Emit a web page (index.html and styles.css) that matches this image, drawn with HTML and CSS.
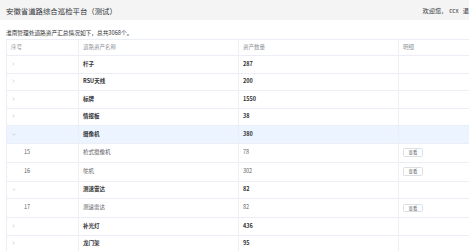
FILE: index.html
```html
<!DOCTYPE html>
<html lang="zh-CN">
<head>
    <meta charset="UTF-8">
    <meta name="viewport" content="width=device-width, initial-scale=1.0">
    <title>安徽省道路综合巡检平台（测试）</title>
    <link rel="stylesheet" href="styles.css">
</head>
<body>
    <div class="page">
        <div class="header">
            <div class="title">安徽省道路综合巡检平台（测试）</div>
            <div class="user">
                <span>欢迎您，</span>
                <span class="name">ccx</span>
                <a href="#" class="logout">退出</a>
            </div>
        </div>
        <div class="summary">淮南管理处道路资产汇总情况如下，总共3068个。</div>
        <table class="asset-table">
            <colgroup>
                <col class="c1">
                <col class="c2">
                <col class="c3">
                <col class="c4">
            </colgroup>
            <thead>
                <tr>
                    <th>序号</th>
                    <th>道路资产名称</th>
                    <th>资产数量</th>
                    <th>明细</th>
                </tr>
            </thead>
            <tbody id="asset-list"></tbody>
        </table>
    </div>
    <script>
        const assets = [
            { name: '杆子', count: 287 },
            { name: 'RSU天线', count: 200 },
            { name: '标牌', count: 1550 },
            { name: '情报板', count: 38 },
            { name: '摄像机', count: 380, open: true, current: true, children: [
                { no: 15, name: '枪式摄像机', count: 78 },
                { no: 16, name: '鸵机', count: 302 }
            ] },
            { name: '测速雷达', count: 82, open: true, children: [
                { no: 17, name: '测速雷达', count: 82 }
            ] },
            { name: '补光灯', count: 436 },
            { name: '龙门架', count: 95 }
        ];

        const arrowRight = '<svg viewBox="0 0 4 6" width="3" height="4"><path d="M1 0.8 L3 3 L1 5.2" fill="none" stroke="#a8abb2" stroke-width="0.7"/></svg>';
        const arrowDown = '<svg viewBox="0 0 6 4" width="4" height="3"><path d="M0.8 1 L3 3 L5.2 1" fill="none" stroke="#a8abb2" stroke-width="0.7"/></svg>';

        const list = document.getElementById('asset-list');
        assets.forEach(item => {
            const row = document.createElement('tr');
            row.className = 'parent-row' + (item.current ? ' current' : '');
            row.innerHTML = `
                <td><span class="arrow">${item.open ? arrowDown : arrowRight}</span></td>
                <td>${item.name}</td>
                <td>${item.count}</td>
                <td></td>
            `;
            list.appendChild(row);
            if (item.open) {
                item.children.forEach(child => {
                    const childRow = document.createElement('tr');
                    childRow.className = 'child-row';
                    childRow.innerHTML = `
                        <td class="child-no">${child.no}</td>
                        <td>${child.name}</td>
                        <td>${child.count}</td>
                        <td><button class="view-button">查看</button></td>
                    `;
                    list.appendChild(childRow);
                });
            }
        });
    </script>
</body>
</html>
```

FILE: styles.css
```css
html, body {
    margin: 0;
    padding: 0;
    overflow: hidden;
    background-color: #fff;
}
body {
    font-family: "Noto Sans CJK SC", "Noto Sans", sans-serif;
    color: #606266;
}
.page {
    width: 481px;
}
.header {
    height: 20px;
    background-color: #f4f4f5;
    display: flex;
    justify-content: space-between;
    align-items: center;
    padding: 0 6px;
}
.title {
    font-size: 7.4px;
    color: #303133;
}
.user {
    font-size: 6.2px;
    color: #303133;
    display: flex;
    align-items: center;
}
.user .name {
    margin: 0 4px 0 2px;
}
.logout {
    color: #303133;
    text-decoration: none;
}
.summary {
    font-size: 5.7px;
    color: #303133;
    padding: 8px 6px 0;
    height: 11px;
}
.asset-table {
    margin-left: 6px;
    width: 469px;
    border-collapse: collapse;
    table-layout: fixed;
    font-size: 5.5px;
}
.c1 { width: 72px; }
.c2 { width: 160px; }
.c3 { width: 160px; }
.asset-table th,
.asset-table td {
    border: 1px solid #ebeef5;
    padding: 0 4px;
    text-align: left;
    vertical-align: middle;
    line-height: 1;
}
.asset-table th {
    height: 15px;
    font-weight: normal;
    color: #909399;
}
.parent-row td {
    height: 16.5px;
    font-weight: bold;
    color: #303133;
}
.parent-row.current td {
    background-color: #ecf5ff;
}
.child-row td {
    height: 18px;
    color: #606266;
}
.child-row .child-no {
    padding-left: 17px;
}
.arrow {
    display: inline-flex;
    align-items: center;
    margin-left: 1px;
}
.view-button {
    font-family: inherit;
    font-size: 4.4px;
    color: #606266;
    background-color: #fff;
    border: 0.5px solid #dcdfe6;
    border-radius: 1.5px;
    width: 20px;
    height: 8.5px;
    padding: 0;
    line-height: 1;
    cursor: pointer;
}
```
